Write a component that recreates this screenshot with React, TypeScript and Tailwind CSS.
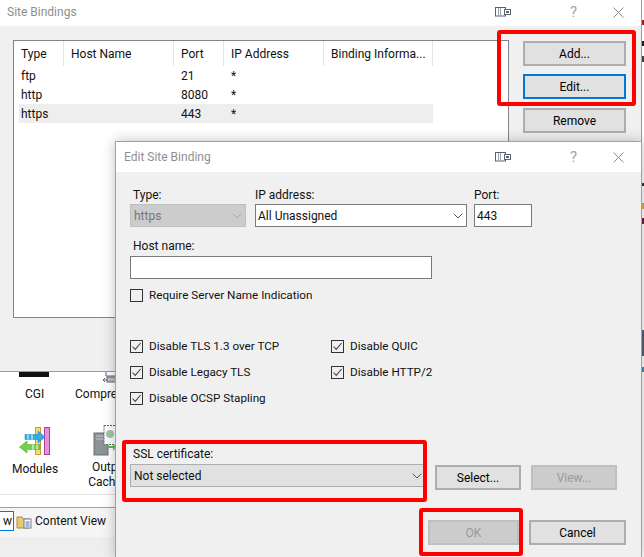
import type { ReactNode } from 'react';
import { ChevronDown } from 'lucide-react';

function Btn({ label, cls = '' }: { label: string; cls?: string }) {
  return (
    <div className={`flex items-center justify-center border-2 border-[#adadad] bg-[#e1e1e1] text-[12px] text-black ${cls}`}>
      {label}
    </div>
  );
}

function DisabledBtn({ label, cls = '' }: { label: string; cls?: string }) {
  return (
    <div className={`flex items-center justify-center border-2 border-[#bfbfbf] bg-[#cccccc] text-[12px] text-[#9a9a9a] ${cls}`}>
      {label}
    </div>
  );
}

function Check({ label, checked = true }: { label: string; checked?: boolean }) {
  return (
    <div className="flex h-[16px] items-center gap-[6px]">
      <div className="flex h-[13px] w-[13px] items-center justify-center border border-[#333] bg-[#f0f0f0]">
        {checked && (
          <svg viewBox="0 0 11 11" className="h-[11px] w-[11px]" fill="none" stroke="#444" strokeWidth="1.1">
            <path d="M1.5 5.5 L4.2 8.4 L9.6 2" />
          </svg>
        )}
      </div>
      <span className="text-[11.7px] leading-[16px] text-[#111]">{label}</span>
    </div>
  );
}

function TitleIcons() {
  return (
    <div className="flex items-center">
      <svg viewBox="0 0 16 10" className="h-[10px] w-[16px]" fill="none">
        <rect x="0.5" y="0.5" width="10" height="8.5" fill="#fff" stroke="#5a6072" />
        <rect x="3" y="1" width="1" height="8" fill="#9aa0ad" />
        <rect x="5" y="1" width="1" height="8" fill="#9aa0ad" />
        <rect x="9.5" y="2.5" width="6" height="5" fill="#fff" stroke="#5a6072" />
        <rect x="11" y="4" width="3" height="2" fill="#5a6072" />
      </svg>
      <span className="ml-[59px] w-[8px] text-[15px] leading-none text-[#a5a5a5]">?</span>
      <svg viewBox="0 0 11 11" className="ml-[35px] h-[11px] w-[11px]" fill="none" stroke="#8a8a8a" strokeWidth="1">
        <path d="M0.5 0.5 L10.5 10.5 M10.5 0.5 L0.5 10.5" />
      </svg>
    </div>
  );
}

function Head({ children, cls = '' }: { children?: ReactNode; cls?: string }) {
  return <div className={`shrink-0 border-r border-[#e5e5e5] pl-[7px] pt-px leading-[25px] ${cls}`}>{children}</div>;
}

function Row({ type, port, cls = '' }: { type: string; port: string; cls?: string }) {
  return (
    <div className={`flex h-[19px] w-[414px] items-center text-[12px] text-[#111] ${cls}`}>
      <div className="w-[45px] pl-[2px]">{type}</div>
      <div className="w-[110px]" />
      <div className="w-[50px] pl-[7px]">{port}</div>
      <div className="pl-[7px]">*</div>
    </div>
  );
}

// bits of whatever sits behind the dialogs, visible past their right edge
const scraps = [
  { top: 'top-[20px]', color: 'bg-[#a02020]', height: 'h-[5px]' },
  { top: 'top-[41px]', color: 'bg-[#222]', height: 'h-[5px]' },
  { top: 'top-[56px]', color: 'bg-[#444]', height: 'h-[6px]' },
  { top: 'top-[183px]', color: 'bg-[#333]', height: 'h-[3px]' },
  { top: 'top-[203px]', color: 'bg-[#d9b04a]', height: 'h-[6px]' },
  { top: 'top-[218px]', color: 'bg-[#702040]', height: 'h-[6px]' },
  { top: 'top-[330px]', color: 'bg-[#5a6072]', height: 'h-[26px]' },
  { top: 'top-[367px]', color: 'bg-[#3a8fc0]', height: 'h-[5px]' },
];

export default function App() {
  return (
    <div className="relative h-[557px] w-[644px] overflow-hidden bg-white font-['Roboto',sans-serif]">
      {scraps.map((s) => (
        <div key={s.top} className={`absolute left-[642px] w-[2px] ${s.top} ${s.height} ${s.color}`} />
      ))}

      {/* IIS manager behind the dialogs */}
      <div className="absolute left-0 top-[372px] h-[185px] w-[116px]">
        <div className="absolute left-[19px] top-0 h-[5px] w-[30px] bg-[#111]" />
        <svg viewBox="0 0 14 11" className="absolute left-[102px] top-0 h-[11px] w-[14px]" fill="none" stroke="#667">
          <path d="M4 0v4h10M2 8h12M1 8l2-2M1 8l2 2" />
          <rect x="5" y="5" width="9" height="5" fill="#b9bdc6" />
        </svg>
        <div className="absolute left-[25px] top-[13px] text-[12px] text-[#111]">CGI</div>
        <div className="absolute left-[75px] top-[13px] text-[12px] text-[#111]">Compression</div>
        <svg viewBox="0 0 31 28" className="absolute left-[19px] top-[55px] h-[28px] w-[31px]">
          <rect x="16.5" y="0.5" width="5" height="27" fill="#f5dc78" stroke="#c7a32e" />
          <rect x="25.5" y="0.5" width="5" height="27" fill="#e590d8" stroke="#a93f9c" />
          <path d="M6 7.5h13V4l7 6-7 6v-3.5H6z" fill="#35a8ea" stroke="#1a7fc0" strokeWidth="0.5" />
          <path d="M9 7.5v5M13 7.5v5" stroke="#fff" strokeWidth="1" />
          <path d="M21 17.5H8V14L0.5 20 8 26v-3.5h13z" fill="#74d14a" stroke="#46a126" strokeWidth="0.5" />
          <path d="M14 17.5v5M18 17.5v5" stroke="#fff" strokeWidth="1" />
        </svg>
        <div className="absolute left-[12px] top-[88px] text-[12px] text-[#111]">Modules</div>
        <svg viewBox="0 0 23 31" className="absolute left-[93px] top-[53px] h-[31px] w-[23px]">
          <rect x="1" y="8" width="14" height="22" fill="#8d9299" stroke="#6c7077" />
          <path d="M3 11h10M3 14h10" stroke="#c5c8cc" />
          <rect x="11" y="0.5" width="12" height="19" fill="#fff" stroke="#666" strokeDasharray="2 1" />
          <circle cx="17" cy="9" r="4" fill="#9fc7a8" />
          <path d="M15 21h5v-3l3 4-3 4v-3h-5z" fill="#5dbb45" />
          <circle cx="6" cy="28" r="1" fill="#4cc24c" />
        </svg>
        <div className="absolute left-[80px] top-[88px] w-[60px] text-center text-[12px] leading-[15px] text-[#111]">
          Output Caching
        </div>
        <div className="absolute left-0 top-[122px] h-px w-full bg-[#e3e3e3]" />
        <div className="absolute left-0 top-[135px] h-[30px] w-full border-t border-[#a0a0a0] bg-[#f5f5f5]" />
        <div className="absolute left-0 top-[165px] h-[20px] w-full bg-[#eeeeee]" />
        <div className="absolute left-0 top-[139px] flex h-[20px] w-[14px] items-center justify-end border border-l-0 border-[#0078d7] bg-white pr-px text-[12px] text-[#111]">
          w
        </div>
        <svg viewBox="0 0 16 16" className="absolute left-[16px] top-[141px] h-[16px] w-[16px]">
          <path d="M1 4h5l1 2h6v9H1z" fill="#e9c878" stroke="#b08d3c" />
          <rect x="8" y="6" width="7" height="9" fill="#fff" stroke="#6b7f99" />
          <path d="M9.5 9h4M9.5 11h4M9.5 13h4" stroke="#3f6fb0" />
        </svg>
        <div className="absolute left-[35px] top-[140px] text-[12px] text-[#111]">Content View</div>
      </div>

      {/* Site Bindings */}
      <div className="absolute left-0 top-0 h-[372px] w-[642px] border-r border-b border-[#9a9a9a] bg-[#f0f0f0]">
        <div className="flex h-[26px] items-center justify-between bg-white pb-[2px] pl-[7px] pr-[17px]">
          <span className="text-[12px] text-[#8f8f8f]">Site Bindings</span>
          <TitleIcons />
        </div>
        <div className="flex items-start">
          <div className="ml-[13px] mt-[14px] h-[278px] w-[496px] border border-[#82838a] bg-white pl-[5px]">
            <div className="flex h-[25px] text-[12px] text-[#111]">
              <Head cls="w-[45px] !pl-[2px]">Type</Head>
              <Head cls="w-[110px]">Host Name</Head>
              <Head cls="w-[50px]">Port</Head>
              <Head cls="w-[100px]">IP Address</Head>
              <Head cls="w-[109px]">Binding Informa...</Head>
            </div>
            <Row type="ftp" port="21" />
            <Row type="http" port="8080" />
            <Row type="https" port="443" cls="bg-[#eeeeee]" />
          </div>
          <div className="ml-[14px] mt-[15px] flex flex-col gap-[8px]">
            <Btn label="Add..." cls="h-[25px] w-[103px]" />
            <Btn label="Edit..." cls="h-[25px] w-[103px] !border-[#0078d7]" />
            <Btn label="Remove" cls="mt-px h-[25px] w-[103px]" />
            <Btn label="" cls="h-[25px] w-[103px]" />
          </div>
        </div>
      </div>

      {/* Edit Site Binding */}
      <div className="absolute left-[115px] top-[141px] h-[416px] w-[527px] border border-b-0 border-[#a0a0a0] bg-[#f0f0f0] shadow-[0_0_12px_rgba(0,0,0,0.25)]">
        <div className="flex h-[30px] items-center justify-between bg-white pl-[8px] pr-[17px]">
          <span className="text-[12px] text-[#8f8f8f]">Edit Site Binding</span>
          <TitleIcons />
        </div>
        <div className="pl-[14px] pt-[15px]">
          <div className="flex">
            <div className="w-[125px]">
              <div className="h-[17px] pl-[3px] text-[12px] leading-[17px] text-[#111]">Type:</div>
              <div className="flex h-[23px] w-[116px] items-center justify-between border border-[#bfbfbf] bg-[#cccccc] pl-[3px] text-[12px] text-[#777]">
                https
                <ChevronDown className="h-[16px] w-[16px] text-[#aaa]" strokeWidth={1.5} />
              </div>
            </div>
            <div className="w-[219px]">
              <div className="h-[17px] text-[12px] leading-[17px] text-[#111]">IP address:</div>
              <div className="flex h-[23px] w-[212px] items-center justify-between border border-[#7a7a7a] bg-white pl-[2px] text-[12px] text-[#111]">
                All Unassigned
                <ChevronDown className="h-[16px] w-[16px] text-[#555]" strokeWidth={1.5} />
              </div>
            </div>
            <div>
              <div className="h-[17px] text-[12px] leading-[17px] text-[#111]">Port:</div>
              <div className="flex h-[23px] w-[58px] items-center border border-[#7a7a7a] bg-white pl-[2px] text-[12px] text-[#111]">
                443
              </div>
            </div>
          </div>
          <div className="mt-[11px] h-[17px] pl-[3px] text-[12px] leading-[17px] text-[#111]">Host name:</div>
          <div className="mt-[1px] h-[23px] w-[302px] border border-[#7a7a7a] bg-white" />
          <div className="mt-[8px]">
            <Check label="Require Server Name Indication" checked={false} />
          </div>
          <div className="mt-[35px] flex">
            <div className="flex w-[201px] flex-col gap-[10px]">
              <Check label="Disable TLS 1.3 over TCP" />
              <Check label="Disable Legacy TLS" />
              <Check label="Disable OCSP Stapling" />
            </div>
            <div className="flex flex-col gap-[10px]">
              <Check label="Disable QUIC" />
              <Check label="Disable HTTP/2" />
            </div>
          </div>
          <div className="mt-[40px] h-[17px] pl-[3px] text-[12px] leading-[17px] text-[#111]">SSL certificate:</div>
          <div className="mt-px flex items-start">
            <div className="flex h-[23px] w-[296px] items-center justify-between border border-[#adadad] bg-[#e1e1e1] pl-[3px] text-[12px] text-[#111]">
              Not selected
              <ChevronDown className="h-[16px] w-[16px] text-[#555]" strokeWidth={1.5} />
            </div>
            <Btn label="Select..." cls="ml-[9px] mt-px h-[25px] w-[86px]" />
            <DisabledBtn label="View..." cls="ml-[10px] mt-px h-[25px] w-[86px]" />
          </div>
          <div className="mt-[30px] flex pl-[298px]">
            <DisabledBtn label="OK" cls="h-[25px] w-[91px]" />
            <Btn label="Cancel" cls="ml-[10px] h-[25px] w-[97px]" />
          </div>
        </div>
      </div>

      {/* Red annotation boxes */}
      <div className="absolute left-[497px] top-[30px] h-[76px] w-[139px] rounded-[3px] border-[4px] border-[#ff0000]" />
      <div className="absolute left-[122px] top-[440px] h-[62px] w-[305px] rounded-[3px] border-[4px] border-[#ff0000]" />
      <div className="absolute left-[419px] top-[508px] h-[48px] w-[104px] rounded-[3px] border-[4px] border-[#ff0000]" />
    </div>
  );
}
